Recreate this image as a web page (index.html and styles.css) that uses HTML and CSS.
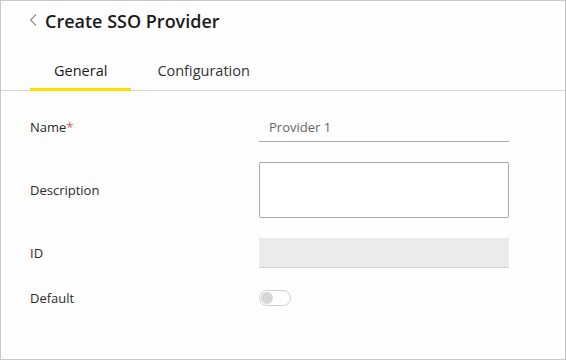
FILE: index.html
```html
<!DOCTYPE html>
<html lang="en">
<head>
    <meta charset="UTF-8">
    <title>Create SSO Provider</title>
    <link rel="stylesheet" href="styles.css">
</head>
<body>
    <div class="page">
        <div class="header">
            <span class="back">
                <svg width="9" height="12" viewBox="0 0 9 12"><path d="M7 0.5 L1.5 6 L7 11.5" fill="none" stroke="#8a8a8a" stroke-width="1.1"/></svg>
            </span>
            <h1>Create SSO Provider</h1>
        </div>

        <div class="tabs">
            <div class="tab active">General</div>
            <div class="tab">Configuration</div>
        </div>

        <div class="form">
            <div class="row row-name">
                <label>Name<span class="req">*</span></label>
                <input type="text" class="line-input" value="Provider 1">
            </div>
            <div class="row row-desc">
                <label>Description</label>
                <textarea class="area"></textarea>
            </div>
            <div class="row row-id">
                <label>ID</label>
                <div class="readonly"></div>
            </div>
            <div class="row row-default">
                <label>Default</label>
                <div class="toggle"><span class="knob"></span></div>
            </div>
        </div>
    </div>
</body>
</html>
```

FILE: styles.css
```css
* {
    margin: 0;
    padding: 0;
    box-sizing: border-box;
    font-family: 'Open Sans', 'Liberation Sans', sans-serif;
}

body {
    width: 566px;
    height: 360px;
    background: #fff;
}

.page {
    width: 566px;
    height: 360px;
    border: 1px solid #c8c8c8;
    background: #fefefe;
}

.header {
    display: flex;
    align-items: center;
    height: 40px;
    padding-left: 28px;
}

.back {
    display: flex;
    width: 16px;
    margin-top: -2px;
}

h1 {
    font-size: 18px;
    font-weight: 600;
    color: #1a1a1a;
}

.tabs {
    display: flex;
    margin-top: 9px;
    padding-left: 29px;
    border-bottom: 1px solid #d6d6d6;
}

.tab {
    height: 41px;
    line-height: 42px;
    padding: 0 25px 0 26px;
    font-size: 14.5px;
    color: #333;
    margin-bottom: -1px;
    border-bottom: 3px solid transparent;
}

.tab.active {
    color: #1a1a1a;
    padding: 0 24px;
    border-bottom-color: #ffdd00;
}

.form {
    display: grid;
    gap: 20px;
    padding: 21px 0 0 29px;
}

.row {
    display: grid;
    grid-template-columns: 229px 250px;
    align-items: center;
}

label {
    font-size: 13px;
    color: #2a2a2a;
}

.req {
    color: #d9534f;
}

.line-input {
    height: 30px;
    border: none;
    border-bottom: 1px solid #a9a9a9;
    padding: 0 10px;
    font-size: 13px;
    color: #666;
    background: transparent;
    outline: none;
}

.area {
    height: 56px;
    border: 1px solid #a9a9a9;
    border-radius: 2px;
    resize: none;
    background: #fff;
}

.readonly {
    height: 30px;
    background: #ebebeb;
    border-bottom: 1px solid #d4d4d4;
}

.row-default {
    margin-top: 1px;
}

.toggle {
    width: 32px;
    height: 16px;
    border: 1px solid #cfcfcf;
    border-radius: 8px;
    padding: 1px;
    display: flex;
    align-items: center;
}

.knob {
    width: 12px;
    height: 12px;
    border-radius: 50%;
    background: #d6d6d6;
}
```
